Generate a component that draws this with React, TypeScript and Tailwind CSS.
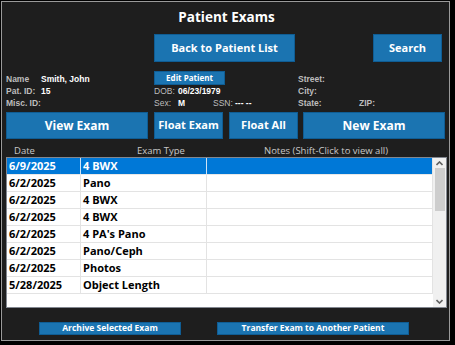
import React from "react";

const rows: [string, string][] = [
  ["6/9/2025", "4 BWX"],
  ["6/2/2025", "Pano"],
  ["6/2/2025", "4 BWX"],
  ["6/2/2025", "4 BWX"],
  ["6/2/2025", "4 PA's Pano"],
  ["6/2/2025", "Pano/Ceph"],
  ["6/2/2025", "Photos"],
  ["5/28/2025", "Object Length"],
];

const btn =
  "flex items-center justify-center bg-[#1b74b1] border border-[#0f5d94] text-white font-bold";

export default function App() {
  const seg = { fontFamily: '"Open Sans", "Noto Sans", sans-serif' };
  const tah = { fontFamily: '"Liberation Sans", Arial, sans-serif' };
  return (
    <div className="w-[455px] h-[345px] bg-black overflow-hidden">
      <div className="ml-[1px] mt-[1px] w-[449px] h-[340px] border border-[#9a9a9a] bg-[#1e1e1e] flex flex-col" style={seg}>
        {/* Title */}
        <div className="h-[32px] flex items-center justify-center text-white font-bold text-[13.5px] leading-none pl-[2px]">
          Patient Exams
        </div>
        {/* top buttons */}
        <div className="h-[28px] flex pl-[152px]">
          <div className={`${btn} w-[141px] h-[28px] text-[11px]`}>Back to Patient List</div>
          <div className={`${btn} w-[69px] h-[28px] text-[11px] ml-[78px]`}>Search</div>
        </div>
        {/* info */}
        <div className="mt-[9px] h-[38px] flex text-[8.5px] leading-[12px]" style={tah}>
          <div className="w-[152px] pl-[4px] pt-[2px] flex flex-col">
            <div className="h-[12px] flex">
              <span className="w-[35px] font-bold text-[#bdbdbd]">Name</span>
              <span className="font-bold text-white">Smith, John</span>
            </div>
            <div className="h-[12px] flex">
              <span className="w-[35px] font-bold text-[#bdbdbd]">Pat. ID:</span>
              <span className="font-bold text-white">15</span>
            </div>
            <div className="h-[12px] flex">
              <span className="w-[35px] font-bold text-[#bdbdbd]">Misc. ID:</span>
            </div>
          </div>
          <div className="w-[144px] flex flex-col">
            <div className={`${btn} w-[71px] h-[14px] text-[8px]`} style={seg}>Edit Patient</div>
            <div className="h-[12px] flex">
              <span className="w-[24px] text-[#bdbdbd]">DOB:</span>
              <span className="font-bold text-white">06/23/1979</span>
            </div>
            <div className="h-[12px] flex">
              <span className="w-[24px] text-[#bdbdbd]">Sex:</span>
              <span className="w-[35px] font-bold text-white">M</span>
              <span className="w-[19px] shrink-0 text-[#bdbdbd]">SSN:</span>
              <span className="font-bold text-white ml-[3px]">--- --</span>
            </div>
          </div>
          <div className="flex flex-col pt-[2px]">
            <div className="h-[12px] font-bold text-[#bdbdbd]">Street:</div>
            <div className="h-[12px] font-bold text-[#bdbdbd]">City:</div>
            <div className="h-[12px] flex font-bold text-[#bdbdbd]">
              <span className="w-[61px]">State:</span>
              <span>ZIP:</span>
            </div>
          </div>
        </div>
        {/* action buttons */}
        <div className="mt-[3px] h-[27px] flex pl-[4px]">
          <div className={`${btn} w-[142px] h-[27px] text-[12px]`}>View Exam</div>
          <div className={`${btn} w-[69px] h-[27px] text-[11px] ml-[6px]`}>Float Exam</div>
          <div className={`${btn} w-[69px] h-[27px] text-[11px] ml-[6px]`}>Float All</div>
          <div className={`${btn} w-[142px] h-[27px] text-[12px] ml-[5px]`}>New Exam</div>
        </div>
        {/* headers */}
        <div className="h-[18px] flex pl-[4px] pt-[6px] text-[9.5px] leading-[12px] text-[#c8c8c8]">
          <span className="w-[131px] pl-[8px]">Date</span>
          <span className="w-[127px]">Exam Type</span>
          <span>Notes (Shift-Click to view all)</span>
        </div>
        {/* table */}
        <div className="ml-[4px] w-[441px] h-[151px] border border-[#828790] bg-white flex">
          <div className="flex-1 flex flex-col">
            {rows.map((r, i) => {
              const sel = i === 0;
              return (
                <div
                  key={i}
                  className={`h-[17px] flex border-b ${sel ? "bg-[#0078d7] text-white border-[#e8e8e8]" : "bg-white text-black border-[#e3e3e3]"} font-bold text-[11px] leading-[16px]`}
                >
                  <div className={`w-[74px] pl-[2px] border-r ${sel ? "border-[#cfe3f5]" : "border-[#e3e3e3]"}`}>{r[0]}</div>
                  <div className={`w-[126px] pl-[2px] border-r ${sel ? "border-[#cfe3f5]" : "border-[#e3e3e3]"}`}>{r[1]}</div>
                  <div className="flex-1 border-r border-[#e3e3e3]"></div>
                </div>
              );
            })}
          </div>
          <div className="w-[13px] bg-[#f0f0f0] flex flex-col items-center">
            <div className="h-[10px] flex items-center justify-center">
              <svg width="7" height="5" viewBox="0 0 7 5">
                <path d="M0.5 4 L3.5 1 L6.5 4" fill="none" stroke="#606060" strokeWidth="1.6" />
              </svg>
            </div>
            <div className="w-[10px] h-[43px] bg-[#cdcdcd]"></div>
            <div className="flex-1"></div>
            <div className="h-[12px] flex items-center justify-center">
              <svg width="7" height="5" viewBox="0 0 7 5">
                <path d="M0.5 1 L3.5 4 L6.5 1" fill="none" stroke="#606060" strokeWidth="1.6" />
              </svg>
            </div>
          </div>
        </div>
        {/* bottom buttons */}
        <div className="mt-[14px] h-[13px] flex pl-[37px]">
          <div className={`${btn} w-[142px] h-[13px] text-[8.5px]`}>Archive Selected Exam</div>
          <div className={`${btn} w-[192px] h-[13px] text-[8.5px] ml-[36px]`}>Transfer Exam to Another Patient</div>
        </div>
      </div>
    </div>
  );
}
